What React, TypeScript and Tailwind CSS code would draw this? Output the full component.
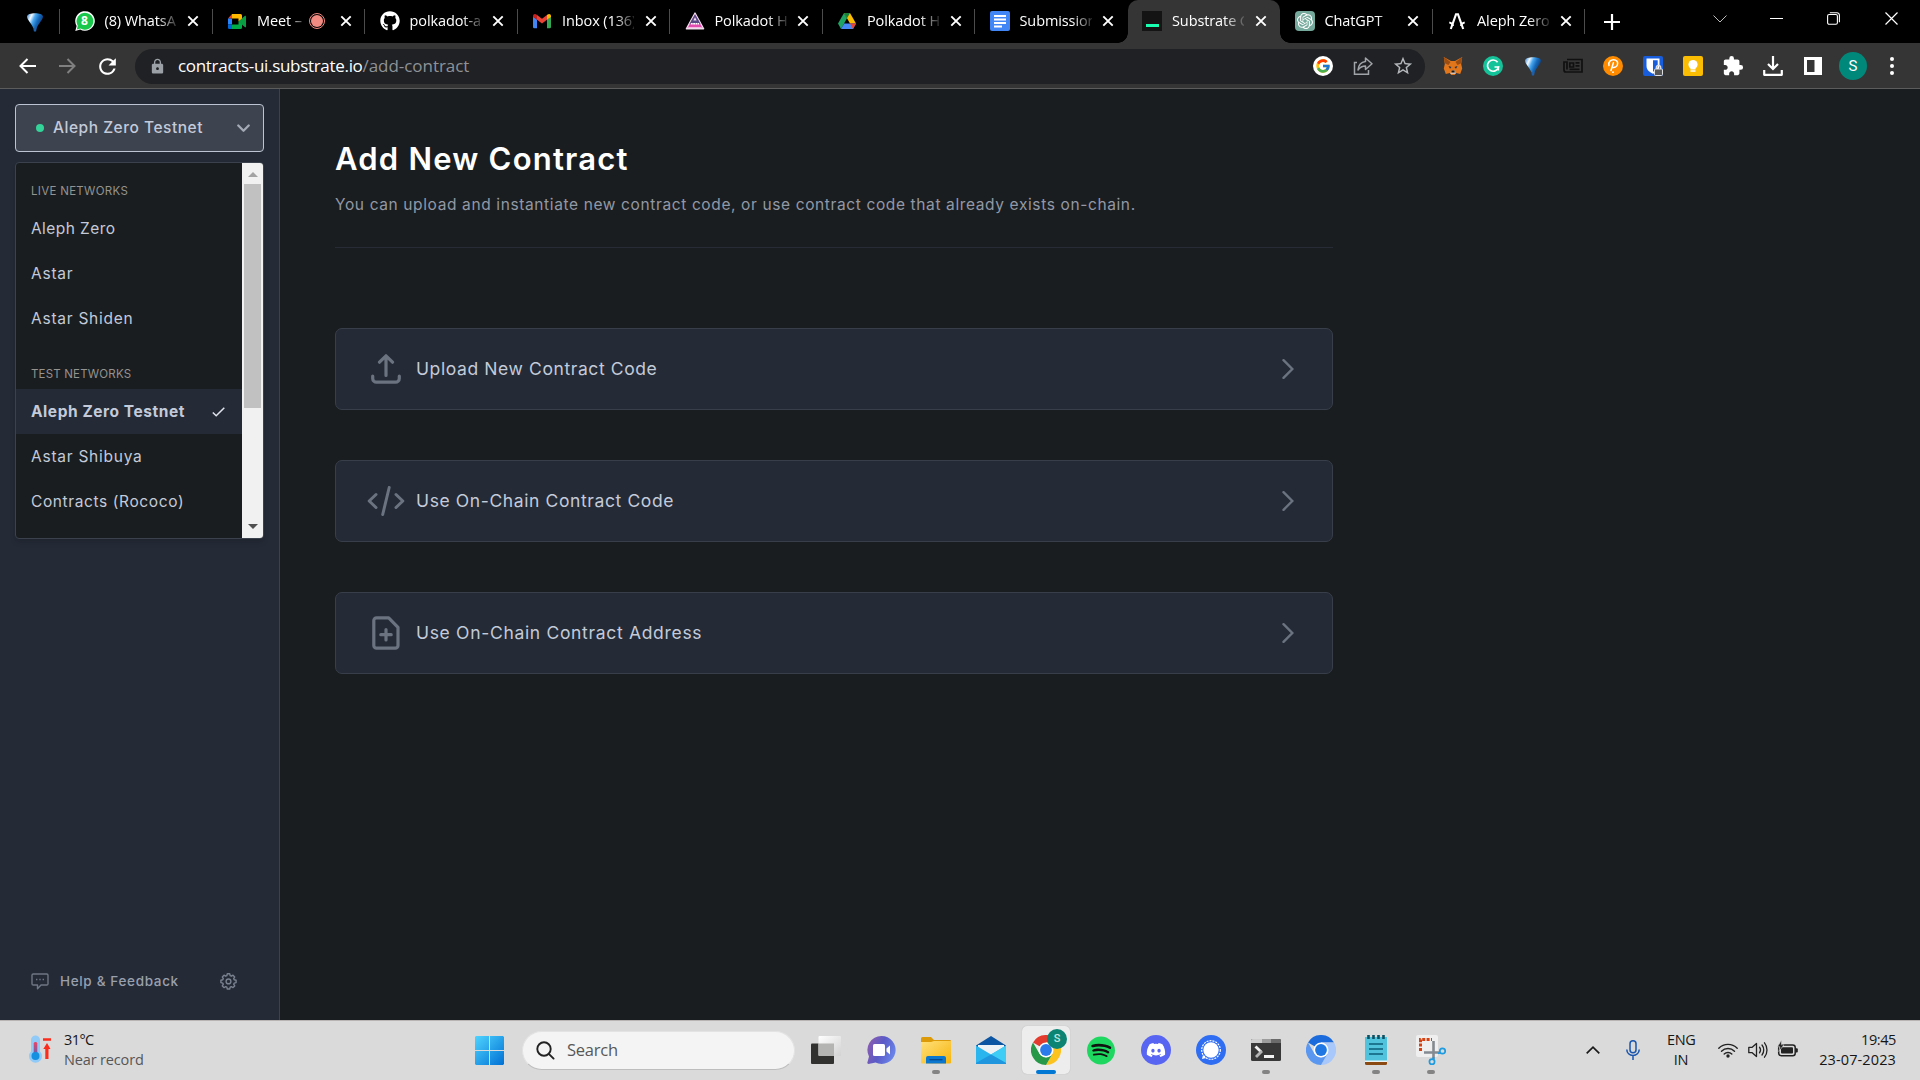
import React from "react";
import { FaGithub, FaDiscord, FaSpotify } from "react-icons/fa";
import { FcGoogle } from "react-icons/fc";
import { SiOpenai } from "react-icons/si";
import { MdExtension, MdLock, MdStarOutline, MdRefresh } from "react-icons/md";

/* ---------- favicons ---------- */

const Balloon = ({ id }: { id: string }) => (
  <svg width="18" height="22" viewBox="0 0 18 22">
    <defs>
      <linearGradient id={id} x1="0" x2="1" y1="0" y2="0.4">
        <stop offset="0" stopColor="#1976d2" />
        <stop offset="0.3" stopColor="#f4faff" />
        <stop offset="0.5" stopColor="#4aa8f0" />
        <stop offset="0.75" stopColor="#1668b8" />
        <stop offset="1" stopColor="#0c3f80" />
      </linearGradient>
    </defs>
    <path d="M1 5.500C1 1 17 1 17 5.500C17 9 12 13 10.800 17H7.200C6 13 1 9 1 5.500Z" fill={`url(#${id})`} />
    <path d="M7.200 17h3.600l-.8 3.500h-2z" fill="#1e5fa8" />
  </svg>
);

const WhatsApp = () => (
  <div className="relative flex size-5 items-center justify-center">
    <svg className="absolute inset-0" width="20" height="20" viewBox="0 0 20 20">
      <path d="M0.300 20L1.600 15A9.800 9.800 0 1 1 5.200 18.500Z" fill="#fff" />
      <path d="M1.800 18.500L2.800 14.700A8.400 8.400 0 1 1 5.500 17.400Z" fill="#19c84b" />
    </svg>
    <span className="relative font-['Open_Sans',sans-serif] text-[12px] leading-none font-bold text-white">8</span>
  </div>
);

const Meet = () => (
  <svg width="20" height="20" viewBox="0 0 20 20">
    <path d="M5 3v4.500H1z" fill="#e94235" />
    <path d="M1 7.500h4v6H1z" fill="#2684fc" />
    <path d="M1 13.500h4V18H2.300A1.300 1.300 0 0 1 1 16.700z" fill="#0066da" />
    <path d="M5 3h8.500A1.500 1.500 0 0 1 15 4.500V8l-3.500 2.500v-3H5z" fill="#ffba00" />
    <path d="M5 13.500h6.500v-3L15 12v4.500a1.500 1.500 0 0 1-1.500 1.500H5z" fill="#00ac47" />
    <path d="M11.500 10.500L18 4.800c.5-.4 1 0 1 .5v10.400c0 .5-.5.900-1 .5z" fill="#0a9c41" />
  </svg>
);

const Gmail = () => (
  <svg width="20" height="20" viewBox="0 0 20 20">
    <path d="M1 5.500V16a1.300 1.300 0 0 0 1.300 1.300H5V8.500z" fill="#4285f4" />
    <path d="M15 8.500v8.800h2.700A1.300 1.300 0 0 0 19 16V5.500z" fill="#34a853" />
    <path d="M1 5c0-2 2-2.700 3.400-1.600L5 4v4.800L1 6z" fill="#c5221f" />
    <path d="M19 5c0-2-2-2.700-3.400-1.600L15 4v4.800L19 6z" fill="#fbbc04" />
    <path d="M5 4l5 3.800L15 4v4.800l-5 3.800-5-3.800z" fill="#ea4335" />
  </svg>
);

const Triangle = () => (
  <svg width="22" height="20" viewBox="0 0 22 20">
    <path d="M11 1.200L20.500 18.500H1.500z" fill="#e24bb0" stroke="#f0dcec" strokeWidth="1.500" strokeLinejoin="round" />
    <path d="M11 2.500L17 13H5z" fill="#5a4a86" />
    <path d="M11 6l1.800 3.500H9.200z" fill="#f5dcef" />
    <path d="M6.500 13h9" stroke="#fff" strokeWidth="1.800" strokeDasharray="2 .5" />
    <path d="M3.500 17.200h15" stroke="#f9c6e6" strokeWidth="1" />
  </svg>
);

const Drive = () => (
  <svg width="20" height="20" viewBox="0 0 20 20">
    <path d="M7 2h6l6 10.500h-6z" fill="#fbbc04" />
    <path d="M7 2l3 5.200L4 18l-3-5.500z" fill="#1ea362" />
    <path d="M4 18l3-5.500h12L16 18z" fill="#4688f4" />
    <path d="M13 12.500h6L16 18z" fill="#ea4335" />
    <path d="M7 2h6l-3 5.200z" fill="#188038" />
  </svg>
);

const Docs = () => (
  <svg width="20" height="20" viewBox="0 0 20 20">
    <rect width="20" height="20" rx="2" fill="#4285f4" />
    <path d="M4 5h12M4 8.500h12M4 12h12M4 15.500h8" stroke="#fff" strokeWidth="1.900" />
  </svg>
);

const Substrate = () => (
  <div className="flex size-5 items-end justify-center bg-[#141414] pb-1">
    <div className="h-[3px] w-[13px] bg-[#18ffb2]" />
  </div>
);

const ChatGpt = () => (
  <div className="flex size-5 items-center justify-center rounded-sm bg-[#75a99b] text-white">
    <SiOpenai size={16} />
  </div>
);

const Aleph = () => (
  <svg width="18" height="20" viewBox="0 0 18 20" fill="none" stroke="#fff" strokeWidth="2.100">
    <path d="M2.800 18L8 3.300h2L15.200 18" />
    <path d="M1.300 11.300C3.500 12 5 13.500 5 15M16.700 11.300C14.500 12 13 13.500 13 15" strokeWidth="1.800" />
  </svg>
);

const Close = () => (
  <svg width="12" height="12" viewBox="0 0 12 12" stroke="#fff" strokeWidth="1.900">
    <path d="M1.300 1.300l9.400 9.400M10.700 1.300l-9.400 9.400" />
  </svg>
);

type Tab = { label: string; icon: React.ReactNode; active?: boolean; recording?: boolean; divider?: boolean };

const tabs: Tab[] = [
  { label: "(8) WhatsA", icon: <WhatsApp />, divider: true },
  { label: "Meet –", icon: <Meet />, recording: true, divider: true },
  { label: "polkadot-a", icon: <FaGithub size={20} color="#fff" />, divider: true },
  { label: "Inbox (136)", icon: <Gmail />, divider: true },
  { label: "Polkadot H", icon: <Triangle />, divider: true },
  { label: "Polkadot H", icon: <Drive />, divider: true },
  { label: "Submission", icon: <Docs /> },
  { label: "Substrate C", icon: <Substrate />, active: true },
  { label: "ChatGPT", icon: <ChatGpt />, divider: true },
  { label: "Aleph Zero", icon: <Aleph />, divider: true },
];

const TabItem = ({ t }: { t: Tab }) => (
  <div className={`relative flex h-[43px] w-[152.500px] shrink-0 items-center pb-[1px] pl-[14.500px] ${t.active ? "rounded-t-[10px] bg-[#353535]" : ""}`}>
    {t.active && (
      <>
        <div className="absolute bottom-0 -left-[10px] size-[10px] bg-[radial-gradient(circle_at_0_0,#000_9.5px,#353535_10px)]" />
        <div className="absolute -right-[10px] bottom-0 size-[10px] bg-[radial-gradient(circle_at_100%_0,#000_9.5px,#353535_10px)]" />
      </>
    )}
    <div className="flex w-5 shrink-0 justify-center">{t.icon}</div>
    <div
      className={`ml-[10px] shrink-0 overflow-hidden font-['Open_Sans',sans-serif] text-[14.5px] leading-5 tracking-[-0.1px] whitespace-pre text-white ${
        t.recording ? "w-[46px] [mask-image:linear-gradient(to_right,#000_32px,transparent_52px)]" : "w-[72px] [mask-image:linear-gradient(to_right,#000_52px,transparent_76px)]"
      }`}
    >
      {t.label}
    </div>
    {t.recording && (
      <div className="ml-[6px] flex size-[16px] shrink-0 items-center justify-center rounded-full border border-[#f28b82]">
        <div className="size-[12px] rounded-full bg-[#f28b82]" />
      </div>
    )}
    <div className={t.recording ? "ml-[14.500px]" : "ml-[10.500px]"}>
      <Close />
    </div>
    {t.divider && <div className="absolute top-[9px] right-0 h-[25px] w-px bg-[#4c4c4c]" />}
  </div>
);

const TabStrip = () => (
  <div className="flex h-[43px] bg-black">
    <div className="relative flex h-[43px] w-[60px] shrink-0 items-center justify-center pl-[9px]">
      <Balloon id="balloonTab" />
      <div className="absolute top-[9px] right-0 h-[25px] w-px bg-[#4c4c4c]" />
    </div>
    {tabs.map((t, i) => (
      <TabItem key={i} t={t} />
    ))}
    <div className="flex w-[53px] items-center justify-center">
      <svg width="16" height="16" viewBox="0 0 16 16" stroke="#fff" strokeWidth="2.200">
        <path d="M8 0v16M0 8h16" />
      </svg>
    </div>
    <div className="ml-auto flex h-[37px] items-center">
      <div className="flex w-[57px] justify-center">
        <svg width="14" height="8" viewBox="0 0 14 8" fill="none" stroke="#bbb">
          <path d="M.5.500L7 7 13.500.500" />
        </svg>
      </div>
      <div className="flex w-[57px] justify-center">
        <div className="h-px w-[13px] bg-white" />
      </div>
      <div className="flex w-[57px] justify-center">
        <svg width="13" height="13" viewBox="0 0 13 13" fill="none" stroke="#fff" strokeWidth="1.100">
          <rect x=".6" y="2.500" width="9.800" height="9.800" rx="1.500" />
          <path d="M2.800.700h7A2.500 2.500 0 0 1 12.400 3.200v7" />
        </svg>
      </div>
      <div className="flex w-[58px] justify-center">
        <svg width="13" height="13" viewBox="0 0 13 13" stroke="#fff" strokeWidth="1.200">
          <path d="M.5.500l12 12M12.500.500l-12 12" />
        </svg>
      </div>
    </div>
  </div>
);

/* ---------- toolbar ---------- */

const Fox = () => (
  <svg width="20" height="20" viewBox="0 0 20 20">
    <path d="M.800 1L8 5h4l7.200-4-1 7 1 4.500-2 5.500-4-1-1.500 2H8.300l-1.500-2-4 1L.800 12.500l1-4.500z" fill="#e2761b" />
    <path d="M.800 1l6.700 5-2 3-3.700-1.700zM19.200 1l-6.700 5 2 3 3.700-1.700z" fill="#9c4d12" />
    <path d="M5.500 10l3 1L7 12.800zM14.500 10l-3 1 1.500 1.800z" fill="#233447" />
    <path d="M8 14.500h4l.6 3.500H7.400z" fill="#d7c1b3" />
    <path d="M8.500 14.500h3l.2 2H8.300z" fill="#161616" />
  </svg>
);

const Grammarly = () => (
  <svg width="20" height="20" viewBox="0 0 20 20">
    <circle cx="10" cy="10" r="10" fill="#15c39a" />
    <path d="M14.600 6.300A5.600 5.600 0 1 0 15.500 11h-4" fill="none" stroke="#fff" strokeWidth="1.700" />
    <path d="M15.400 10.500v4" stroke="#fff" strokeWidth="1.500" />
  </svg>
);

const News = () => (
  <svg width="20" height="16" viewBox="0 0 20 16" fill="none" stroke="#101010" strokeWidth="1.700">
    <path d="M4 1.500h15v12.500H3A2 2 0 0 1 1 12V4h3v7.500" />
    <path d="M6.800 5h3.700v4H6.800zM12.500 4.800h4M12.500 7.800h4M6.500 11.300h10" />
  </svg>
);

const PolkadotCircle = () => (
  <svg width="20" height="20" viewBox="0 0 20 20">
    <circle cx="10" cy="10" r="10" fill="#ff8c00" />
    <path d="M6 9.500C5 5.500 8 3.800 10.500 3.800c3 0 4.400 2 4.100 4.200-.4 2.800-3 4-5.300 3.200M10.400 6.800L8 14.500" fill="none" stroke="#fff" strokeWidth="1.500" strokeLinecap="round" />
    <circle cx="10" cy="16.200" r=".9" fill="#fff" />
  </svg>
);

const Bitwarden = () => (
  <svg width="20" height="20" viewBox="0 0 20 20">
    <rect width="20" height="20" rx="2" fill="#175ddc" />
    <path d="M3.500 2.500h13V10c0 4-3.500 6.500-6.500 7.800C7 16.500 3.500 14 3.500 10z" fill="#fff" />
    <path d="M10 4.300h4.700V10c0 2.500-2.400 4.500-4.700 5.700z" fill="#175ddc" />
    <rect x="11.500" y="13" width="8" height="6.500" rx="1" fill="#555" stroke="#ddd" strokeWidth="1" />
    <path d="M13.300 13v-1.500a2.200 2.200 0 0 1 4.400 0V13" fill="none" stroke="#ddd" strokeWidth="1.300" />
  </svg>
);

const Keep = () => (
  <svg width="20" height="20" viewBox="0 0 20 20">
    <rect width="20" height="20" rx="2" fill="#fbbc04" />
    <circle cx="10" cy="8.500" r="4.600" fill="#fff" />
    <path d="M7.500 10h5v3.500h-5zM7.500 14.300h5v1.500h-5z" fill="#fff" />
  </svg>
);

const Share = () => (
  <svg width="20" height="20" viewBox="0 0 20 20" fill="none" stroke="#a0a3a7" strokeWidth="1.500">
    <path d="M4 6.500H1.500v11.800h14V14" />
    <path d="M12.500 2v3.500C8 6 5.500 9 5 14c2-2.800 4.500-4 7.500-4v3.500L19 7.700z" strokeLinejoin="round" />
  </svg>
);

const Toolbar = () => (
  <div className="flex h-[46px] items-center border-b border-[#5c5c5c] bg-[#353535] pt-px">
    <div className="ml-[7px] flex w-10 justify-center">
      <svg width="17" height="16" viewBox="0 0 17 16" fill="none" stroke="#fff" strokeWidth="2">
        <path d="M17 8H1.500M8.500 1L1.500 8l7 7" />
      </svg>
    </div>
    <div className="flex w-10 justify-center">
      <svg width="17" height="16" viewBox="0 0 17 16" fill="none" stroke="#808080" strokeWidth="2">
        <path d="M0 8h15.500M8.500 1l7 7-7 7" />
      </svg>
    </div>
    <div className="flex w-10 justify-center text-white">
      <MdRefresh size={25} />
    </div>
    <div className="ml-[8px] flex h-[35px] w-[1290px] items-center rounded-full bg-[#202124] font-['Open_Sans',sans-serif] text-[17px]">
      <MdLock size={17} className="ml-[14px] text-[#9aa0a6]" />
      <span className="ml-[12px] tracking-[-0.31px] text-white">contracts-ui.substrate.io</span>
      <span className="tracking-[-0.05px] text-[#8e9297]">/add-contract</span>
      <div className="mr-[2px] ml-auto flex">
        <div className="flex w-10 items-center justify-center">
          <div className="flex size-5 items-center justify-center rounded-full bg-white">
            <FcGoogle size={16} />
          </div>
        </div>
        <div className="flex w-10 items-center justify-center">
          <Share />
        </div>
        <div className="flex w-10 items-center justify-center text-[#b4b7bb]">
          <MdStarOutline size={22} />
        </div>
      </div>
    </div>
    <div className="ml-[7.500px] flex items-center">
      {[
        <Fox />,
        <Grammarly />,
        <Balloon id="balloonExt" />,
        <News />,
        <PolkadotCircle />,
        <Bitwarden />,
        <Keep />,
        <MdExtension size={22} color="#fff" />,
        <svg width="20" height="20" viewBox="0 0 20 20" fill="none" stroke="#fff" strokeWidth="2.200">
          <path d="M10 0v12.500M5 8l5 5 5-5" />
          <path d="M1.200 14v4.800h17.600V14" strokeLinejoin="round" />
        </svg>,
        <svg width="18" height="18" viewBox="0 0 18 18">
          <path d="M0 0h18v18H0zM3 3v12h7.500V3z" fill="#fff" fillRule="evenodd" />
        </svg>,
      ].map((icon, i) => (
        <div key={i} className="flex w-10 justify-center">
          {icon}
        </div>
      ))}
      <div className="ml-[6.500px] flex size-7 items-center justify-center rounded-full bg-[#00897b] font-['Roboto',sans-serif] text-[15px] text-white">S</div>
      <div className="ml-[23px] flex flex-col gap-[3px]">
        <div className="size-1 rounded-full bg-white" />
        <div className="size-1 rounded-full bg-white" />
        <div className="size-1 rounded-full bg-white" />
      </div>
    </div>
  </div>
);

/* ---------- sidebar ---------- */

const NetworkRow = ({ name, spacing, selected }: { name: string; spacing: string; selected?: boolean }) => (
  <div className={`flex h-[45px] items-center justify-between pr-[17px] pl-[15px] text-[15.5px] text-[#c3cad9] ${spacing} ${selected ? "bg-[#242a36] font-bold" : ""}`}>
    <span>{name}</span>
    {selected && (
      <svg width="13" height="10" viewBox="0 0 13 10" fill="none" stroke="#e0e4ec" strokeWidth="1.500">
        <path d="M.8 5.500l3.400 3.300L12.300.800" />
      </svg>
    )}
  </div>
);

const Sidebar = () => (
  <aside className="flex w-[280px] shrink-0 flex-col border-r border-[#3b414d] bg-[#242a36] pt-[15px] pl-[15px]">
    <button className="flex h-[48px] w-[249px] items-center rounded-[4px] border border-[#bcc4d3] bg-[#3d434f] pr-[13px] pl-[20px]">
      <span className="size-2 rounded-full bg-[#34d399]" />
      <span className="ml-[9px] text-[15.5px] font-medium tracking-[0.52px] text-[#c3cad9]">Aleph Zero Testnet</span>
      <svg className="ml-auto" width="13" height="9" viewBox="0 0 13 9" fill="none" stroke="#a4aab6" strokeWidth="2.300" strokeLinecap="round" strokeLinejoin="round">
        <path d="M1.300 1.500l5.200 5.200 5.200-5.200" />
      </svg>
    </button>
    <div className="mt-[10px] flex h-[377px] w-[249px] overflow-hidden rounded-[4px] border border-[#3b424e] bg-[#1a1d1f] shadow-md">
      <div className="flex-1 pt-[13px]">
        <div className="h-[30px] pl-[15px] text-[11.5px] leading-[30px] tracking-[0.3px] text-[#94938f]">LIVE NETWORKS</div>
        <NetworkRow name="Aleph Zero" spacing="tracking-[0.42px]" />
        <NetworkRow name="Astar" spacing="tracking-[0.75px]" />
        <NetworkRow name="Astar Shiden" spacing="tracking-[0.75px]" />
        <div className="mt-[18px] h-[30px] pl-[15px] text-[11.5px] leading-[30px] tracking-[0.18px] text-[#94938f]">TEST NETWORKS</div>
        <NetworkRow name="Aleph Zero Testnet" spacing="tracking-[0.55px]" selected />
        <NetworkRow name="Astar Shibuya" spacing="tracking-[0.75px]" />
        <NetworkRow name="Contracts (Rococo)" spacing="tracking-[0.61px]" />
      </div>
      <div className="flex w-[21px] flex-col items-center bg-[#f1f1f1]">
        <div className="flex h-[21px] items-center pt-[2px]">
          <svg width="10" height="5" viewBox="0 0 10 5">
            <path d="M5 0l5 5H0z" fill="#a3a3a3" />
          </svg>
        </div>
        <div className="h-[224px] w-[17px] bg-[#c1c1c1]" />
        <div className="mt-auto flex h-[22px] items-center pb-px">
          <svg width="10" height="5" viewBox="0 0 10 5">
            <path d="M5 5l5-5H0z" fill="#505050" />
          </svg>
        </div>
      </div>
    </div>
    <div className="mt-auto mb-[27px] flex h-6 items-center pl-[16px]">
      <svg width="18" height="17" viewBox="0 0 18 17" fill="none" stroke="#6f7684" strokeWidth="1.400" strokeLinejoin="round">
        <path d="M2.200 1h13.600A1.200 1.200 0 0 1 17 2.200v8.600a1.200 1.200 0 0 1-1.200 1.200H10l-3.500 3.800V12H2.200A1.200 1.200 0 0 1 1 10.800V2.200A1.200 1.200 0 0 1 2.200 1z" />
        <path d="M5 6.500h1.400M8.300 6.500h1.400M11.600 6.500H13" />
      </svg>
      <span className="ml-[11px] text-[13.5px] font-medium tracking-[0.66px] text-[#99a0ad]">Help &amp; Feedback</span>
      <svg className="ml-[41px]" width="17" height="17" viewBox="0 0 17 17" fill="none" stroke="#7a818f" strokeWidth="1.400" strokeLinejoin="round">
        <path d="M7.300.800h2.400l.5 1.900 1.100.5 1.700-1 1.700 1.700-1 1.700.5 1.100 1.900.5v2.400l-1.900.5-.5 1.100 1 1.700-1.700 1.700-1.700-1-1.100.5-.5 1.900H7.300l-.5-1.900-1.100-.5-1.700 1-1.700-1.700 1-1.700-.5-1.100-1.900-.5V7.200l1.900-.5.500-1.100-1-1.700L4 2.200l1.700 1 1.100-.5z" />
        <circle cx="8.500" cy="8.400" r="2.400" />
      </svg>
    </div>
  </aside>
);

/* ---------- content ---------- */

const UploadIcon = () => (
  <svg width="30" height="30" viewBox="0 0 30 30" fill="none" stroke="#6b7280" strokeWidth="3.200" strokeLinecap="round" strokeLinejoin="round">
    <path d="M15 21.500V2M8.500 8.200L15 1.800l6.500 6.400" />
    <path d="M1.700 22v2.400a3.800 3.800 0 0 0 3.800 3.800h19a3.800 3.800 0 0 0 3.800-3.800V22" />
  </svg>
);

const CodeIcon = () => (
  <svg width="38" height="30" viewBox="0 0 38 30" fill="none" stroke="#6b7280" strokeWidth="3" strokeLinecap="round" strokeLinejoin="round">
    <path d="M9 8.500L2.200 15 9 21.500M29 8.500l6.800 6.500L29 21.500M22.200 1.500l-6.500 27" />
  </svg>
);

const FileIcon = () => (
  <svg width="28" height="34" viewBox="0 0 28 34" fill="none" stroke="#6b7280" strokeWidth="3.200" strokeLinecap="round" strokeLinejoin="round">
    <path d="M4.500 1.800h12.200L26 11.300v18.200a2.700 2.700 0 0 1-2.700 2.700H4.500a2.700 2.700 0 0 1-2.700-2.700v-25A2.700 2.700 0 0 1 4.500 1.800z" />
    <path d="M14 13.500v10.400M8.800 18.700h10.400" />
  </svg>
);

const OptionCard = ({ icon, label, spacing }: { icon: React.ReactNode; label: string; spacing: string }) => (
  <div className="flex h-[82px] items-center rounded-[7px] border border-[#383f4b] bg-[#242a36] pr-[38px] pl-[30px]">
    <div className="flex w-10 justify-center">{icon}</div>
    <span className={`ml-[10px] text-[17.5px] text-[#c3cad9] ${spacing}`}>{label}</span>
    <svg className="ml-auto" width="12" height="20" viewBox="0 0 12 20" fill="none" stroke="#6b7280" strokeWidth="2.400" strokeLinecap="round">
      <path d="M1.500 1.200L10.300 10l-8.800 8.800" />
    </svg>
  </div>
);

const Content = () => (
  <main className="flex w-[1053px] flex-col pl-[55px]">
    <h1 className="mt-[51px] text-[31px] leading-[38px] font-semibold tracking-[1.22px] text-white">Add New Contract</h1>
    <p className="mt-[15px] text-[15.5px] leading-6 tracking-[0.62px] text-[#9298a5]">
      <span className="whitespace-nowrap">You can upload and instantiate new contract code, or use contract code that already exists on-chain.</span>
    </p>
    <div className="mt-[30px] h-px bg-[#262b36]" />
    <div className="mt-[80px] flex flex-col gap-[50px]">
      <OptionCard icon={<UploadIcon />} label="Upload New Contract Code" spacing="tracking-[0.6px]" />
      <OptionCard icon={<CodeIcon />} label="Use On-Chain Contract Code" spacing="tracking-[0.61px]" />
      <OptionCard icon={<FileIcon />} label="Use On-Chain Contract Address" spacing="tracking-[0.68px]" />
    </div>
  </main>
);

/* ---------- taskbar ---------- */

const TaskView = () => (
  <svg width="30" height="28" viewBox="0 0 30 28">
    <defs>
      <linearGradient id="tvLight" x1="0" y1="0" x2="1" y2="1">
        <stop offset="0" stopColor="#fff" />
        <stop offset="1" stopColor="#d2d2d2" />
      </linearGradient>
    </defs>
    <rect y="7.500" width="23" height="20.500" rx="1" fill="#31322f" />
    <rect x="7.500" width="22.500" height="20" rx="1" fill="url(#tvLight)" />
    <path d="M7.500 7.500H23V20H8.500a1 1 0 0 1-1-1z" fill="#b4b4b2" />
  </svg>
);

const Chat = () => (
  <svg width="29" height="28" viewBox="0 0 29 28">
    <defs>
      <linearGradient id="chatG" x1="0" y1="0.200" x2="1" y2="0.600">
        <stop offset="0" stopColor="#8d5cae" />
        <stop offset="0.500" stopColor="#5b5bc7" />
        <stop offset="1" stopColor="#6a86ec" />
      </linearGradient>
    </defs>
    <path d="M14.500 0a14 14 0 1 1-6 26.600L1.500 28c-1 0-1.500-1-1-2l1.500-5.500A14 14 0 0 1 14.500 0z" fill="url(#chatG)" />
    <rect x="6" y="8" width="12" height="12" rx="1.500" fill="#fff" />
    <path d="M19.500 12.500L23 9.500v9l-3.500-3z" fill="#fff" />
  </svg>
);

const Folder = () => (
  <svg width="30" height="27" viewBox="0 0 30 27">
    <defs>
      <linearGradient id="folderG" x1="0" y1="0" x2="1" y2="1">
        <stop offset="0" stopColor="#ffe07a" />
        <stop offset="1" stopColor="#f7b50c" />
      </linearGradient>
    </defs>
    <path d="M0 1.500A1.500 1.500 0 0 1 1.500 0H10l3 3h16a1 1 0 0 1 1 1v6H0z" fill="#dd9a08" />
    <path d="M0 5h10l3-1h17v21.500a1 1 0 0 1-1 1H1a1 1 0 0 1-1-1z" fill="url(#folderG)" />
    <path d="M5 26.500V21a2 2 0 0 1 2-2h16a2 2 0 0 1 2 2v5.500z" fill="#0c77cf" />
    <path d="M8.500 22.700h13" stroke="#06458a" strokeWidth="1.200" />
  </svg>
);

const Mail = () => (
  <svg width="30" height="28" viewBox="0 0 30 28">
    <path d="M0 9.500L15 0l15 9.500V14H0z" fill="#0b55a3" />
    <path d="M2 9h26v6L15 21 2 15z" fill="#eef2f5" />
    <path d="M0 9.500L15 18.500 30 9.500V27a1 1 0 0 1-1 1H1a1 1 0 0 1-1-1z" fill="#2bb5ee" />
    <path d="M30 9.500L15 18.500 30 27z" fill="#3fcdf6" />
    <path d="M0 28L0 27 15 18.500 30 27V28z" fill="#1f96de" />
  </svg>
);

const chromeWedges = ["M15 15L2 7.500A15 15 0 0 1 28 7.500H15z", "M15 7.500H28A15 15 0 0 1 15 30L21.500 18.700z", "M2 7.500A15 15 0 0 0 15 30L21.500 18.800 15 22.500 8.500 18.800z"];

const ChromeIcon = ({ colors, ring }: { colors: string[]; ring: string }) => (
  <svg width="30" height="30" viewBox="0 0 30 30">
    <path d={chromeWedges[0]} fill={colors[0]} />
    <path d={chromeWedges[1]} fill={colors[1]} />
    <path d={chromeWedges[2]} fill={colors[2]} />
    <circle cx="15" cy="15" r="7.500" fill={ring} />
    <circle cx="15" cy="15" r="5.900" fill={colors[3]} />
  </svg>
);

const Signal = () => (
  <svg width="30" height="30" viewBox="0 0 30 30">
    <circle cx="15" cy="15" r="15" fill="#2f6df2" />
    <circle cx="15" cy="15" r="9.300" fill="none" stroke="#fff" strokeWidth="1.200" strokeDasharray="2 1" />
    <path d="M6 24l1-4 3 3z" fill="#fff" />
    <circle cx="15" cy="15" r="7.700" fill="#fff" />
  </svg>
);

const Terminal = () => (
  <svg width="30" height="22" viewBox="0 0 30 22">
    <rect width="30" height="22" rx="1.500" fill="#383838" />
    <path d="M0 4V1.500A1.500 1.500 0 0 1 1.500 0H11v4z" fill="#cdcdcd" />
    <path d="M11 0h9v4h-9z" fill="#9c9c9c" />
    <path d="M20 0h8.500A1.500 1.500 0 0 1 30 1.500V4H20z" fill="#6b6b6b" />
    <path d="M4.500 7.500l5.500 5.300" stroke="#f0f0f0" strokeWidth="2.800" fill="none" />
    <path d="M11 12l-6 6" stroke="#b5b5b5" strokeWidth="2.800" fill="none" />
    <rect x="13" y="16" width="10" height="3" fill="#f3f3f3" />
  </svg>
);

const Notepad = () => (
  <svg width="22" height="30" viewBox="0 0 22 30">
    <path d="M0 27h22v1.500a1.500 1.500 0 0 1-1.500 1.500h-19A1.500 1.500 0 0 1 0 28.500z" fill="#8c4a13" />
    <rect y="2" width="22" height="24" fill="#52c3dd" />
    <rect y="25.500" width="22" height="1.500" fill="#e9f3f5" />
    <path d="M3.500 0v4M8.500 0v4M13.500 0v4M18.500 0v4" stroke="#0b5063" strokeWidth="2.600" />
    <path d="M4 9h14M4 14h14M4 19h14" stroke="#0d5f7a" strokeWidth="1.600" />
  </svg>
);

const Snip = () => (
  <svg width="30" height="30" viewBox="0 0 30 30">
    <rect width="22" height="22" rx="2" fill="#efefef" />
    <path d="M4.500 16V4.500H16" fill="none" stroke="#d8400f" strokeWidth="3" strokeDasharray="3 1.400" />
    <path d="M17.500 6v18M8 17.500h16" stroke="#848a91" strokeWidth="2.600" />
    <circle cx="26.500" cy="16" r="2.700" fill="none" stroke="#1f9be0" strokeWidth="1.700" />
    <circle cx="16" cy="26.800" r="2.600" fill="none" stroke="#1f9be0" strokeWidth="1.700" />
    <path d="M22 18.500l2.500-1.200M17.500 22v2.500" stroke="#1f9be0" strokeWidth="1.800" />
  </svg>
);

const Discord = () => (
  <div className="flex size-[30px] items-center justify-center rounded-full bg-[#5865f2] text-white">
    <FaDiscord size={20} />
  </div>
);

const Spotify = () => (
  <div className="flex size-[28px] items-center justify-center rounded-full bg-[radial-gradient(circle,#111_11px,transparent_12px)]">
    <FaSpotify size={29} color="#1ed760" />
  </div>
);

const apps: { icon: React.ReactNode; state?: "running" | "active" }[] = [
  { icon: <TaskView /> },
  { icon: <Chat /> },
  { icon: <Folder />, state: "running" },
  { icon: <Mail /> },
  {
    icon: (
      <div className="relative size-[30px]">
        <ChromeIcon colors={["#e33b2e", "#fcc31e", "#279847", "#2b7bea"]} ring="#fff" />
        <div className="absolute -top-[6px] left-[16px] flex size-5 items-center justify-center rounded-full bg-[#0b8474] font-['Roboto',sans-serif] text-[11px] font-medium text-[#bfe5df]">S</div>
      </div>
    ),
    state: "active",
  },
  { icon: <Spotify /> },
  { icon: <Discord /> },
  { icon: <Signal /> },
  { icon: <Terminal />, state: "running" },
  { icon: <ChromeIcon colors={["#1c6bdc", "#a8c7fa", "#5a97f0", "#1f77e4"]} ring="#fff" /> },
  { icon: <Notepad />, state: "running" },
  { icon: <Snip />, state: "running" },
];

const Taskbar = () => (
  <footer className="flex h-[60px] items-center border-t border-[#b9b4b4] bg-[#dadada] pb-px font-['Open_Sans',sans-serif] text-[14.5px] leading-5 text-[#161616]">
    <div className="flex w-[475px] items-center pl-[29px]">
      <svg className="-mt-[3px]" width="22" height="28" viewBox="0 0 22 28">
        <defs>
          <linearGradient id="thermo" x1="0" y1="0" x2="0" y2="1">
            <stop offset="0" stopColor="#f2415f" />
            <stop offset="1" stopColor="#5b62b8" />
          </linearGradient>
        </defs>
        <path d="M2 5a4.500 4.500 0 0 1 9 0v11.500a6.500 6.500 0 1 1-9 0z" fill="#90caf9" />
        <rect x="4.700" y="7" width="3.600" height="13" rx="1.500" fill="url(#thermo)" />
        <circle cx="6.500" cy="21" r="4" fill="#1590e0" />
        <path d="M14 3.200h8v2.600h-8zM18 8l3.500 6h-2v10h-3.200V14h-2z" fill="#fb2c1c" />
      </svg>
      <div className="ml-[13px]">
        <div className="tracking-[-0.6px]">31°C</div>
        <div className="tracking-[-0.15px] text-[#565656]">Near record</div>
      </div>
    </div>
    <svg width="29" height="29" viewBox="0 0 29 29">
      <defs>
        <linearGradient id="win" gradientUnits="userSpaceOnUse" x1="0" y1="0" x2="29" y2="29">
          <stop offset="0" stopColor="#4fd4ff" />
          <stop offset="1" stopColor="#0070d4" />
        </linearGradient>
      </defs>
      <path d="M1 0h13v14H0V1zM15 0h13l1 1v13H15zM0 15h14v14H1l-1-1zM15 15h14v13l-1 1H15z" fill="url(#win)" />
    </svg>
    <div className="ml-[18px] flex h-[39px] w-[273px] items-center rounded-full border border-[#e3e3e3] border-b-[#bdbdbd] bg-[#f4f4f4] pl-[13px]">
      <svg width="19" height="19" viewBox="0 0 19 19" fill="none" stroke="#222" strokeWidth="1.900" strokeLinecap="round">
        <circle cx="8" cy="8" r="6.700" />
        <path d="M12.800 12.800L17.600 17.600" />
      </svg>
      <span className="ml-[12px] text-[16.5px] tracking-[-0.25px] text-[#585858]">Search</span>
    </div>
    <div className="ml-[7px] flex gap-[7px]">
      {apps.map((a, i) => (
        <div
          key={i}
          className={`relative flex size-12 items-center justify-center rounded-[5px] ${a.state === "active" ? "bg-[#ededed] shadow-[0_0_1px_#aaa]" : ""}`}
        >
          {a.icon}
          {a.state === "running" && <div className="absolute bottom-0 left-5 h-1 w-2 rounded-full bg-[#838383]" />}
          {a.state === "active" && <div className="absolute bottom-0 left-[14px] h-1 w-5 rounded-full bg-[#0078d4]" />}
        </div>
      ))}
    </div>
    <div className="ml-auto flex items-center pr-[24px]">
      <svg width="14" height="8" viewBox="0 0 14 8" fill="none" stroke="#1a1a1a" strokeWidth="1.700">
        <path d="M.7 7.300L7 1.200l6.300 6.100" />
      </svg>
      <svg className="ml-[26px]" width="14" height="20" viewBox="0 0 14 20" fill="none" stroke="#1a56b0" strokeWidth="1.500">
        <rect x="4" y=".8" width="6" height="12" rx="3" />
        <path d="M.8 9.500c0 3.500 2.700 6 6.200 6s6.200-2.500 6.200-6M7 15.500V20" />
      </svg>
      <div className="ml-[27px] w-[28px] text-center tracking-[-0.3px]">
        <div>ENG</div>
        <div>IN</div>
      </div>
      <svg className="ml-[23px]" width="20" height="15" viewBox="0 0 20 15" fill="none" stroke="#222" strokeWidth="1.400" strokeLinecap="round">
        <path d="M.8 5.200a13 13 0 0 1 18.400 0M3.500 8.200a9.200 9.200 0 0 1 13 0M6.200 11a5.400 5.400 0 0 1 7.600 0" />
        <circle cx="10" cy="13" r="1.700" fill="#222" stroke="none" />
      </svg>
      <svg className="ml-[10px]" width="20" height="18" viewBox="0 0 20 18" fill="none" stroke="#222" strokeWidth="1.300" strokeLinecap="round" strokeLinejoin="round">
        <path d="M.8 6.300h3.400L8.500 2.500v13L4.200 11.700H.8z" />
        <path d="M11.500 6.200c1.200 1.600 1.200 4 0 5.600M14 4c2.300 2.800 2.300 7.200 0 10M16.500 1.800c3.300 4 3.300 10.400 0 14.400" />
      </svg>
      <svg className="-mt-[3px] ml-[9px]" width="21" height="17" viewBox="0 0 21 17">
        <rect x="1.700" y="5" width="16.500" height="10.800" rx="2.500" fill="none" stroke="#222" strokeWidth="1.500" />
        <rect x="4" y="7.300" width="12" height="6.300" rx="1" fill="#222" />
        <path d="M18.500 8.200h1.300a1 1 0 0 1 1 1v2.300a1 1 0 0 1-1 1h-1.300z" fill="#222" />
        <path d="M4.500 0L.500 6.800H3L1.800 11.500 7 4.800H4.300z" fill="#222" stroke="#dadada" strokeWidth=".6" />
      </svg>
      <div className="ml-[18px] w-[80px] text-right tracking-[0.12px]">
        <div className="tracking-[-0.4px]">19:45</div>
        <div>23-07-2023</div>
      </div>
    </div>
  </footer>
);

export default function App() {
  return (
    <div className="flex h-[1080px] w-[1920px] flex-col overflow-hidden bg-[#1a1d1f]">
      <TabStrip />
      <Toolbar />
      <div className="flex min-h-0 flex-1 font-['Inter',sans-serif]">
        <Sidebar />
        <Content />
      </div>
      <Taskbar />
    </div>
  );
}
